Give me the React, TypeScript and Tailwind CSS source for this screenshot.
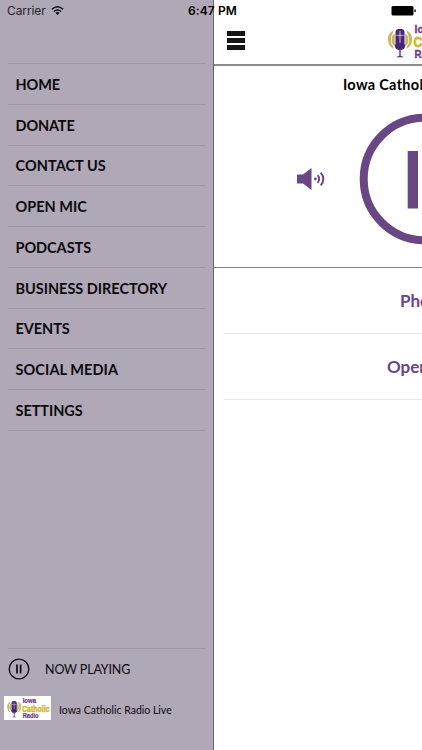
import clsx from "clsx";

const MENU = [
  { label: "HOME", tracking: "tracking-[-0.1px]" },
  { label: "DONATE", tracking: "tracking-[-0.15px]" },
  { label: "CONTACT US", tracking: "tracking-[0.05px]" },
  { label: "OPEN MIC", tracking: "tracking-[0px]" },
  { label: "PODCASTS", tracking: "tracking-[-0.05px]" },
  { label: "BUSINESS DIRECTORY", tracking: "tracking-[-0.03px]" },
  { label: "EVENTS", tracking: "tracking-[-0.07px]" },
  { label: "SOCIAL MEDIA", tracking: "tracking-[0.08px]" },
  { label: "SETTINGS", tracking: "tracking-[-0.05px]" },
];

function Logo({ className }: { className?: string }) {
  return (
    <svg viewBox="0 0 74 36" className={className} aria-label="Iowa Catholic Radio">
      <g fill="#c9b763">
        <path d="M5.6 6.6Q-.4 9 0 15.8T5.6 25L4.8 22.2Q3 20.5 3 15.8T4.8 9.4Z" />
        <path d="M6.8 9.6Q3.6 11 3.6 15.8T6.8 22Z" />
        <path d="M18.4 6.6Q24.4 9 24 15.8T18.4 25L19.2 22.2Q21 20.5 21 15.8T19.2 9.4Z" />
        <path d="M17.2 9.6Q20.4 11 20.4 15.8T17.2 22Z" />
      </g>
      <rect x="7.5" y="5" width="9" height="20" rx="3.4" fill="#472578" />
      <path d="M12 7V19M8.4 11.3H15.6" stroke="#e6dff0" strokeWidth=".8" />
      <path d="M7.2 20.5Q7.4 25.4 12 25.4T16.8 20.5M12 25V32" fill="none" stroke="#472578" strokeWidth="1.3" />
      <path d="M8 33.2Q12 30.6 16 33.2Z" fill="#472578" />
      <g fontFamily="'Liberation Sans', sans-serif" fontWeight="700" strokeWidth=".4">
        <text
          x="26.6"
          y="9.2"
          fontSize="11.5"
          fill="#6c3c91"
          stroke="#6c3c91"
          textLength="23"
          lengthAdjust="spacingAndGlyphs"
        >
          Iowa
        </text>
        <text
          x="25.5"
          y="23.2"
          fontSize="15.5"
          fill="#d5b92f"
          stroke="#d5b92f"
          strokeWidth=".9"
          textLength="47"
          lengthAdjust="spacingAndGlyphs"
        >
          Catholic
        </text>
        <text
          x="26.6"
          y="34.3"
          fontSize="11.5"
          fill="#6c3c91"
          stroke="#6c3c91"
          textLength="27"
          lengthAdjust="spacingAndGlyphs"
        >
          Radio
        </text>
      </g>
    </svg>
  );
}

function StatusBar() {
  return (
    <div className="absolute inset-x-0 top-0 z-10 h-[22px] font-['Inter',sans-serif] text-black">
      <span className="absolute left-[7px] top-[3px] text-[12px] leading-4 tracking-[-0.1px] text-[#28242b]">Carrier</span>
      <svg viewBox="0 0 14 10" className="absolute left-[51px] top-[6px] h-[9px] w-[13px]">
        <g fill="none" stroke="#0c0a0d" strokeWidth="1.6">
          <path d="M.8 3.7Q7-1.8 13.2 3.7" />
          <path d="M3 6.1Q7 2.7 11 6.1" />
        </g>
        <path d="M4.7 7.6Q7 5.8 9.3 7.6L7 10Z" fill="#0c0a0d" />
      </svg>
      <span className="absolute left-[188px] top-[3px] whitespace-nowrap text-[12px] font-semibold leading-4 tracking-[0.1px]">
        6:47 PM
      </span>
      <svg viewBox="0 0 25 10" className="absolute left-[391px] top-[6px] h-[10px] w-[25px]">
        <rect x=".5" y="0" width="22" height="9.6" rx="1.5" />
        <rect x="23.4" y="3.3" width="1.4" height="3" rx=".7" />
      </svg>
    </div>
  );
}

function Sidebar() {
  return (
    <aside className="flex w-[214px] shrink-0 flex-col border-r border-[#69646d] bg-[#b0a8b7] pt-[63px] text-[#0c080e]">
      <nav className="ml-2 mr-[7px] border-t border-[#9f97a6]">
        {MENU.map((item) => (
          <a
            key={item.label}
            className={clsx(
              "flex h-[40.75px] items-center whitespace-nowrap border-b border-[#9f97a6] pl-[7.5px] pt-[1.5px] text-[14.5px] font-bold",
              item.tracking,
            )}
          >
            {item.label}
          </a>
        ))}
      </nav>

      <div className="ml-2 mr-[7px] mt-auto flex h-[41px] items-center border-t border-[#9f97a6]">
        <svg viewBox="0 0 22 22" className="h-[22px] w-[22px]" fill="none" stroke="#0c080e">
          <circle cx="11" cy="11" r="9.8" strokeWidth="1.3" />
          <path d="M9 6.5V15.5M12.6 6.5V15.5" strokeWidth="1.7" />
        </svg>
        <span className="ml-[15px] mt-[2px] text-[12.5px] tracking-[-0.15px]">NOW PLAYING</span>
      </div>
      <div className="mb-[30px] ml-1 mt-[7px] flex h-6 items-center">
        <div className="flex h-6 w-[47px] items-center bg-white pl-[2.5px]">
          <Logo className="h-[21px] w-[43.5px]" />
        </div>
        <span className="ml-2 mt-[6px] whitespace-nowrap text-[10.5px]">Iowa Catholic Radio Live</span>
      </div>
    </aside>
  );
}

function Player() {
  return (
    <main className="w-[375px] shrink-0 bg-white">
      <header className="flex h-[66px] items-end border-b-2 border-[#8d8d8d]">
        <div className="mb-[14px] ml-[13px] flex w-[18px] flex-col gap-[2px]">
          <div className="h-[5px] bg-[#161616]" />
          <div className="h-[5px] bg-[#161616]" />
          <div className="h-[5px] bg-[#161616]" />
        </div>
        <Logo className="mb-1 ml-[143px] h-9 w-[74px] shrink-0" />
      </header>

      <section className="h-[202px] border-b border-[#858585]">
        <h1 className="pl-[129px] pt-[9px] text-[14.5px] font-bold leading-5 tracking-[0.3px] text-black">
          Iowa Catholic Radio Live
        </h1>
        <div className="mt-[18px] flex items-center">
          <svg viewBox="0 0 28 24" className="ml-[83px] h-6 w-7 shrink-0" fill="#694684">
            <path d="M0 8Q0 7.5 .6 7.5H6L14.5 1V23L6 16.5H.6Q0 16.5 0 16Z" />
            <circle cx="18.4" cy="12" r="1.4" />
            <path
              d="M20.6 8.1Q23.7 12 20.6 15.9M23.7 5.6Q29 12 23.7 18.4"
              fill="none"
              stroke="#694684"
              strokeWidth="1.9"
            />
          </svg>
          <svg viewBox="0 0 132 132" className="ml-[34px] h-[132px] w-[132px] shrink-0" fill="#694684">
            <circle cx="66" cy="66" r="61.3" fill="none" stroke="#694684" strokeWidth="8" />
            <rect x="48.7" y="38" width="10.3" height="57.5" />
            <rect x="73" y="38" width="10.3" height="57.5" />
          </svg>
        </div>
      </section>

      <section className="pl-[10px] text-[17px] font-bold text-[#694684]">
        <div className="flex h-[66px] items-center border-b border-[#e6e6e6] pl-[176px]">Phone</div>
        <div className="flex h-[66px] items-center border-b border-[#e6e6e6] pl-[163px]">Open Mic</div>
      </section>
    </main>
  );
}

export default function App() {
  return (
    <div className="relative flex h-[750px] w-[422px] overflow-hidden bg-white font-['Lato',sans-serif]">
      <StatusBar />
      <Sidebar />
      <Player />
    </div>
  );
}
